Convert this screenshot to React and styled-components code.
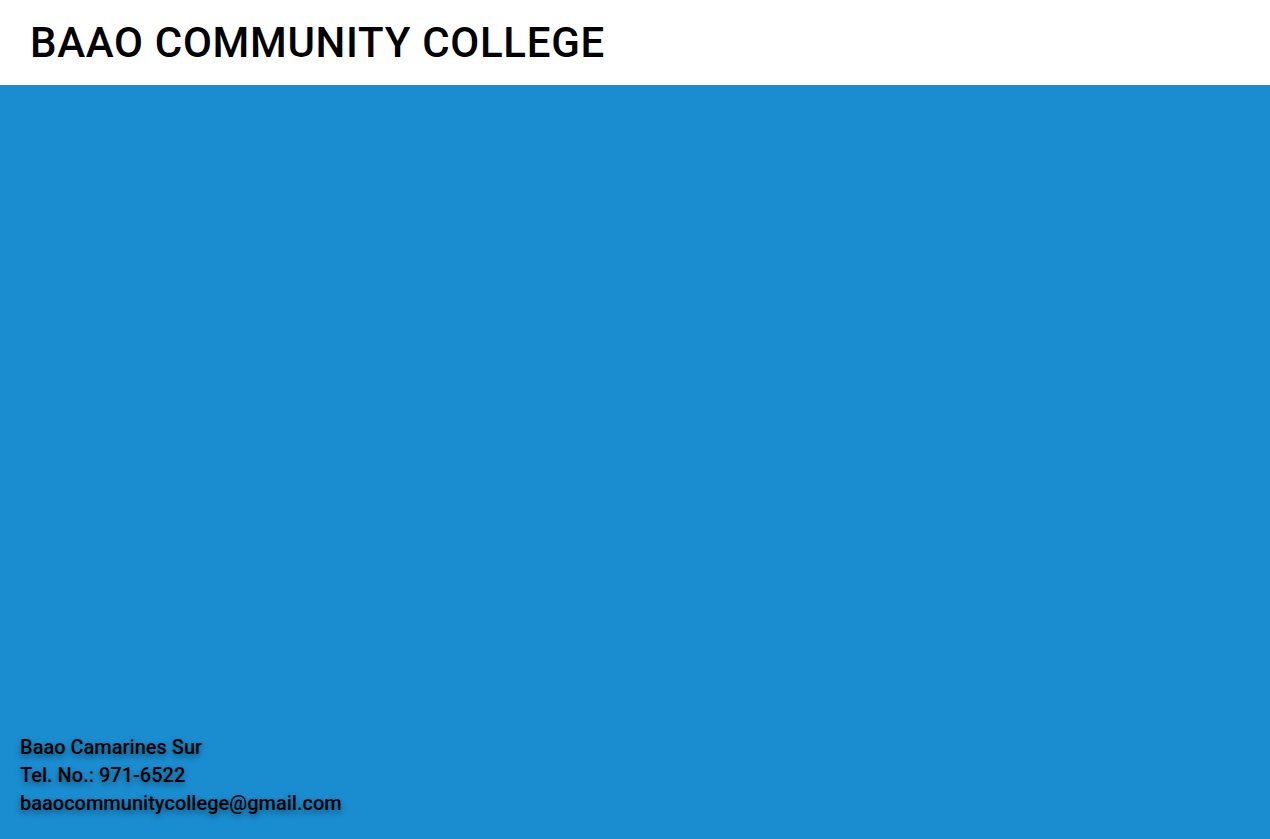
import React from "react";
import styled, { createGlobalStyle } from "styled-components";

const Global = createGlobalStyle`
  html, body { margin: 0; padding: 0; height: 100%; }
  body { font-family: Roboto, "Noto Sans", sans-serif; }
  #root { height: 100%; }
`;

const Page = styled.div`
  display: flex;
  flex-direction: column;
  height: 100vh;
`;

const Header = styled.header`
  height: 85px;
  background: #ffffff;
  display: flex;
  align-items: center;
  padding: 0 30px;
  box-sizing: border-box;
`;

const Title = styled.h1`
  margin: 0;
  font-family: Roboto, sans-serif;
  font-weight: 500;
  font-size: 42px;
  letter-spacing: 0.7px;
  color: #000;
`;

const Main = styled.main`
  flex: 1;
  background: #1a8dd1;
  display: flex;
  flex-direction: column;
  justify-content: flex-end;
`;

const Footer = styled.footer`
  padding: 0 20px 22px;
`;

const Line = styled.p`
  margin: 0;
  font-size: 20px;
  font-weight: 500;
  line-height: 28px;
  color: #000;
  text-shadow: 0 3px 6px rgba(0, 0, 0, 0.45);
`;

export default function App() {
  return (
    <>
      <Global />
      <Page>
        <Header>
          <Title>BAAO COMMUNITY COLLEGE</Title>
        </Header>
        <Main>
          <Footer>
            <Line>Baao Camarines Sur</Line>
            <Line>Tel. No.: 971-6522</Line>
            <Line>baaocommunitycollege@gmail.com</Line>
          </Footer>
        </Main>
      </Page>
    </>
  );
}
